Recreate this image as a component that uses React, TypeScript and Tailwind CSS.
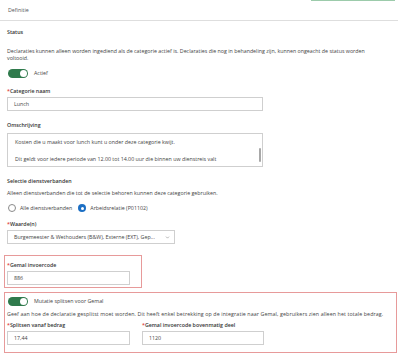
import React from "react";
import { ChevronDown } from "lucide-react";

function Toggle({ label }: { label: string }) {
  return (
    <div className="flex items-center gap-[6px]">
      <div className="w-[20px] h-[9px] rounded-full bg-[#2f7a4c] flex items-center justify-end pr-[1.5px]">
        <div className="w-[6.5px] h-[6.5px] rounded-full bg-white" />
      </div>
      <span className="text-[#444]">{label}</span>
    </div>
  );
}

function Label({ children }: { children: React.ReactNode }) {
  return (
    <div className="font-semibold text-[#333]">
      <span className="text-[#d33]">*</span>
      {children}
    </div>
  );
}

function Input({ value, width }: { value: string; width: string }) {
  return (
    <div
      className={`${width} h-[14px] border border-[#cfcfcf] flex items-center pl-[6px] text-[#444]`}
    >
      {value}
    </div>
  );
}

export default function App() {
  return (
    <div className="w-[400px] h-[354px] bg-white overflow-hidden text-[5.3px] leading-[7px] text-[#333] font-['Open_Sans',sans-serif]">
      {/* Header */}
      <div className="w-[398px] h-[21px] border-b border-[#dedede] flex justify-between items-start">
        <span className="ml-[8px] mt-[7px] text-[#555]">Definitie</span>
        <div className="w-[84px] h-[1px] bg-[#9ccbab] mr-[3px]" />
      </div>

      <div className="px-[7px]">
        {/* Status */}
        <div className="mt-[8px] font-semibold">Status</div>
        <p className="mt-[12px] text-[#444] w-[375px]">
          Declaraties kunnen alleen worden ingediend als de categorie actief is. Declaraties die nog in behandeling zijn, kunnen ongeacht de status worden voltooid.
        </p>
        <div className="mt-[7px] ml-[1px]">
          <Toggle label="Actief" />
        </div>

        {/* Categorie naam */}
        <div className="mt-[10px]">
          <Label>Categorie naam</Label>
        </div>
        <div className="mt-[2px]">
          <Input value="Lunch" width="w-[256px]" />
        </div>

        {/* Omschrijving */}
        <div className="mt-[11px] font-semibold">Omschrijving</div>
        <div className="mt-[4px] w-[256px] h-[34px] border border-[#cfcfcf] flex">
          <div className="flex-1 pl-[7px] pt-[4px] leading-[8.5px] text-[#444]">
            <div>Kosten die u maakt voor lunch kunt u onder deze categorie kwijt.</div>
            <div>&nbsp;</div>
            <div className="whitespace-nowrap">
              Dit geldt voor iedere periode van 12.00 tot 14.00 uur die binnen uw dienstreis valt
            </div>
          </div>
          <div className="w-[4px] flex justify-center pt-[14px]">
            <div className="w-[1.5px] h-[14px] bg-[#a8a8a8] rounded-full" />
          </div>
        </div>

        {/* Selectie dienstverbanden */}
        <div className="mt-[11px] font-semibold">Selectie dienstverbanden</div>
        <div className="mt-[5px] text-[#444]">
          Alleen dienstverbanden die tot de selectie behoren kunnen deze categorie gebruiken.
        </div>
        <div className="mt-[7px] flex items-center gap-[6px] text-[#444]">
          <div className="flex items-center gap-[4px] ml-[1px]">
            <div className="w-[8px] h-[8px] rounded-full border border-[#8a8a8a]" />
            <span>Alle dienstverbanden</span>
          </div>
          <div className="flex items-center gap-[4px]">
            <div className="w-[8px] h-[8px] rounded-full bg-[#1c6fc4] flex items-center justify-center">
              <div className="w-[3px] h-[3px] rounded-full bg-white" />
            </div>
            <span>Arbeidsrelatie (P01102)</span>
          </div>
        </div>

        {/* Waarde(n) */}
        <div className="mt-[9px]">
          <Label>Waarde(n)</Label>
        </div>
        <div className="mt-[2px] w-[168px] h-[14px] border border-[#cfcfcf] flex items-center justify-between pl-[6px] pr-[4px] text-[#444]">
          <span className="whitespace-nowrap">
            Burgemeester &amp; Wethouders (B&amp;W), Externe (EXT), Gep...
          </span>
          <ChevronDown size={5} strokeWidth={2} className="text-[#555]" />
        </div>
      </div>

      {/* Gemal invoercode */}
      <div className="mt-[11px] ml-[4px] w-[138px] border border-[#e79a9a] px-[2px] pt-[6px] pb-[2px]">
        <Label>Gemal invoercode</Label>
        <div className="mt-[2px]">
          <Input value="886" width="w-[123px]" />
        </div>
      </div>

      {/* Mutatie splitsen */}
      <div className="mt-[4px] ml-[4px] w-[393px] h-[61px] border border-[#e79a9a] px-[2px] pt-[4px]">
        <div className="ml-[1px]">
          <Toggle label="Mutatie splitsen voor Gemal" />
        </div>
        <div className="mt-[5px] text-[#444] whitespace-nowrap tracking-[0.1px]">
          Geef aan hoe de declaratie gesplitst moet worden. Dit heeft enkel betrekking op de integratie naar Gemal, gebruikers zien alleen het totale bedrag.
        </div>
        <div className="mt-[4px] flex gap-[12px]">
          <div>
            <Label>Splitsen vanaf bedrag</Label>
            <div className="mt-[2px]">
              <Input value="17,44" width="w-[123px]" />
            </div>
          </div>
          <div>
            <Label>Gemal invoercode bovenmatig deel</Label>
            <div className="mt-[2px]">
              <Input value="1120" width="w-[122px]" />
            </div>
          </div>
        </div>
      </div>
    </div>
  );
}
